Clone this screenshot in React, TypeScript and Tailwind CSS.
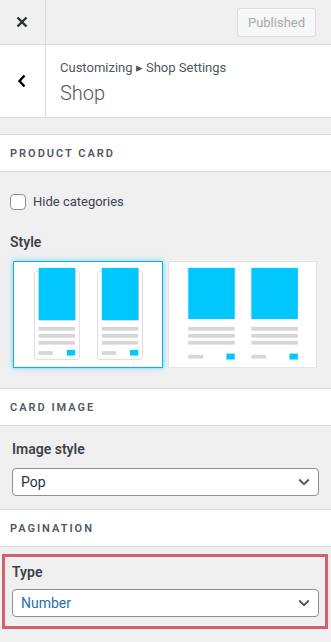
import React from "react";

const BLUE = "#00c8ff";
const GRAY = "#d6d6d6";

function PopCard() {
  const mini = (dx: number) => (
    <g key={dx} transform={`translate(${dx} 0)`}>
      <rect x={20.5} y={9.5} width={45} height={88} rx={2} fill="#fff" stroke="#dcdcdc" />
      <rect x={25.4} y={6.4} width={36.6} height={52.3} fill="#b5b5b5" opacity={0.7} />
      <rect x={24.7} y={5.7} width={36.6} height={52.3} fill={BLUE} />
      <rect x={24.7} y={65} width={36.6} height={3.7} fill={GRAY} />
      <rect x={24.7} y={72} width={36.6} height={3.7} fill={GRAY} />
      <rect x={24.7} y={79} width={36.6} height={3.7} fill={GRAY} />
      <rect x={24.7} y={89.3} width={14.3} height={3.7} fill={GRAY} />
      <rect x={53} y={88} width={8.3} height={5.7} fill={BLUE} />
    </g>
  );
  return (
    <svg viewBox="0 0 148 105" className="block w-full h-full">
      {mini(0)}
      {mini(63.4)}
    </svg>
  );
}

function FlatCard() {
  const item = (dx: number) => (
    <g key={dx} transform={`translate(${dx} 0)`}>
      <rect x={19.3} y={5.7} width={46.7} height={51.3} fill={BLUE} />
      <rect x={19.3} y={65} width={46.7} height={3.7} fill={GRAY} />
      <rect x={19.3} y={72} width={46.7} height={3.7} fill={GRAY} />
      <rect x={19.3} y={79} width={46.7} height={3.7} fill={GRAY} />
      <rect x={19.3} y={93} width={15} height={3.7} fill={GRAY} />
      <rect x={57.6} y={91.7} width={8.4} height={6} fill={BLUE} />
    </g>
  );
  return (
    <svg viewBox="0 0 148 105" className="block w-full h-full">
      {item(0)}
      {item(63.3)}
    </svg>
  );
}

function Chevron() {
  return (
    <svg width="12" height="8" viewBox="0 0 12 8" className="block">
      <path d="M1.2 1.5 L6 6.2 L10.8 1.5" fill="none" stroke="#50575e" strokeWidth="1.8" />
    </svg>
  );
}

function SelectBox({ value, color }: { value: string; color: string }) {
  return (
    <div className="flex items-center justify-between h-[28px] bg-white border border-[#8c8f94] rounded-[4px] pl-[8px] pr-[8px]">
      <span className={`text-[14px] leading-none ${color}`}>{value}</span>
      <Chevron />
    </div>
  );
}

function SectionHeader({ title }: { title: string }) {
  return (
    <div className="h-[38px] bg-white border-y border-[#dcdcde] flex items-center pl-[10px]">
      <span className="text-[11px] font-semibold tracking-[2px] text-[#50575e] leading-none">{title}</span>
    </div>
  );
}

export default function App() {
  return (
    <div className="w-[331px] h-[642px] bg-[#f0f0f1] overflow-hidden font-['Roboto',sans-serif]">
      {/* top bar */}
      <div className="flex h-[45px] border-b border-[#dcdcde]">
        <div className="w-[46px] border-r border-[#dcdcde] flex items-center justify-center">
          <svg width="12" height="12" viewBox="0 0 12 12" className="block -mt-[1px] -ml-[1px]">
            <path d="M1.5 1.5 L10.5 10.5 M10.5 1.5 L1.5 10.5" stroke="#2c3338" strokeWidth="2.4" />
          </svg>
        </div>
        <div className="flex-1 flex justify-end items-start pt-[8px] pr-[15px]">
          <div className="h-[29px] w-[79px] flex items-center justify-center bg-[#f6f7f7] border border-[#dcdcde] rounded-[3px] text-[13px] text-[#a7aaad]">
            Published
          </div>
        </div>
      </div>

      {/* header */}
      <div className="flex h-[73px] bg-white border-b border-[#dcdcde]">
        <div className="w-[46px] border-r border-[#dcdcde] flex items-center justify-center">
          <svg width="10" height="14" viewBox="0 0 10 14" className="block -ml-[2px]">
            <path d="M7.5 1.5 L2.5 7 L7.5 12.5" fill="none" stroke="#000" strokeWidth="2.4" />
          </svg>
        </div>
        <div className="pl-[14px] pt-[14px]">
          <div className="text-[13px] leading-[18px] text-[#50575e]">Customizing ▸ Shop Settings</div>
          <div className="mt-[2px] text-[20px] leading-[28px] font-light text-[#50575e]">Shop</div>
        </div>
      </div>

      {/* product card */}
      <div className="mt-[16px]">
        <SectionHeader title="PRODUCT CARD" />
        <div className="pt-[22px] pb-[20px]">
          <div className="flex items-center pl-[10px] h-[16px]">
            <div className="w-[16px] h-[16px] bg-white border border-[#8c8f94] rounded-[4px]" />
            <span className="ml-[7px] text-[13px] text-[#3c434a]">Hide categories</span>
          </div>
          <div className="mt-[22px] pl-[10px] text-[14px] leading-[20px] font-semibold text-[#3c434a]">Style</div>
          <div className="mt-[9px] pl-[13px] pr-[14px] grid grid-cols-2 gap-[5px]">
            <div className="h-[107px] bg-white border border-[#00b6f5] shadow-[0_0_5px_rgba(0,182,245,0.55)]">
              <PopCard />
            </div>
            <div className="h-[107px] bg-white border border-[#e2e4e7]">
              <FlatCard />
            </div>
          </div>
        </div>
      </div>

      {/* card image */}
      <SectionHeader title="CARD IMAGE" />
      <div className="pt-[13px] pb-[13px] px-[12px]">
        <div className="text-[14px] leading-[20px] font-semibold text-[#3c434a]">Image style</div>
        <div className="mt-[9px]">
          <SelectBox value="Pop" color="text-[#2c3338]" />
        </div>
      </div>

      {/* pagination */}
      <SectionHeader title="PAGINATION" />
      <div className="mt-[7px] ml-[2px] mr-[3px] border-[3px] border-[#d1626b] pl-[7px] pr-[6px] pt-[5px] pb-[9px]">
        <div className="text-[14px] leading-[20px] font-semibold text-[#3c434a]">Type</div>
        <div className="mt-[7px]">
          <SelectBox value="Number" color="text-[#2271b1]" />
        </div>
      </div>
    </div>
  );
}
